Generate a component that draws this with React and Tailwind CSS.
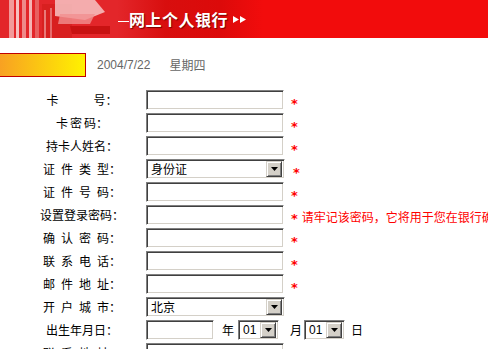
import React from 'react';

const inset = "border border-t-[#808080] border-l-[#808080] border-b-white border-r-white shadow-[inset_1px_1px_0_#404040,inset_-1px_-1px_0_#d4d0c8] bg-white";

function Label({ chars, gap = 0 }) {
  return (
    <div className="w-[146px] shrink-0 pl-[18px] flex justify-center text-[12px] text-black leading-none">
      <div className="flex" style={{ gap }}>
        {chars.map((c, i) => <span key={i}>{c}</span>)}
      </div>
      <span>：</span>
    </div>
  );
}

function Star({ ml = 'ml-[7px]' }) {
  return <span className={`${ml} shrink-0 mt-[7px] text-[#ff0000] text-[13px] font-bold leading-none font-['DejaVu_Sans',sans-serif]`}>*</span>;
}

function TextBox({ w = 'w-[138px]' }) {
  return <input className={`${w} shrink-0 h-[20px] ${inset} outline-none px-1 text-[12px]`} />;
}

function Select({ w = 'w-[139px]', value, mono }) {
  return (
    <div className={`${w} shrink-0 h-[20px] ${inset} flex items-center justify-between pl-[4px] pr-[2px]`}>
      <span className={`text-[12px] leading-none text-black ${mono ? "font-['Liberation_Sans',sans-serif]" : ''}`}>{value}</span>
      <div className="w-[16px] h-[16px] bg-[#d4d0c8] border border-t-[#d4d0c8] border-l-[#d4d0c8] border-b-[#404040] border-r-[#404040] shadow-[inset_1px_1px_0_#fff,inset_-1px_-1px_0_#808080] flex items-center justify-center">
        <svg width="7" height="4" viewBox="0 0 7 4"><path d="M0 0h7L3.5 4z" fill="#000" /></svg>
      </div>
    </div>
  );
}

function Row({ children }) {
  return <div className="flex items-center h-[20px] mb-[3px] whitespace-nowrap">{children}</div>;
}

function BannerPhoto() {
  return (
    <svg width="118" height="38" viewBox="0 0 118 38" className="shrink-0">
      <rect width="118" height="38" fill="#e3262a" />
      <rect x="9" y="0" width="5" height="38" fill="#f29a9a" />
      <rect x="16" y="0" width="3" height="38" fill="#f6c0c0" />
      <rect x="22" y="0" width="4" height="38" fill="#ee8a8a" />
      <rect x="29" y="0" width="3" height="38" fill="#f4b4b4" />
      <rect x="35" y="0" width="4" height="38" fill="#e86060" />
      <rect x="42" y="4" width="30" height="34" fill="#d82020" />
      <path d="M55 0h40l10 12-20 8-30-4z" fill="#f7c4c4" opacity="0.85" />
      <path d="M60 14h35l-5 10H58z" fill="#f19090" opacity="0.8" />
      <path d="M70 26h40v8H72z" fill="#c81212" />
      <rect x="44" y="10" width="2" height="28" fill="#f0a0a0" opacity="0.7" />
      <rect x="50" y="8" width="2" height="30" fill="#f0a0a0" opacity="0.6" />
    </svg>
  );
}

export default function App() {
  return (
    <div className="w-[488px] h-[349px] overflow-hidden bg-white font-['Noto_Sans_CJK_SC',sans-serif]">
      {/* Banner */}
      <div className="h-[38px] flex items-center bg-[linear-gradient(90deg,#e3262a_0%,#e3262a_24%,#d80e0e_34%,#dc0a0a_45%,#f20c0c_54%,#f20c0c_100%)]">
        <BannerPhoto />
        <div className="w-[11px] h-px bg-white mt-[5px]" />
        <span className="text-white text-[16px] font-bold leading-none tracking-[0.5px] [text-shadow:1px_1px_1px_#7a0000]">网上个人银行</span>
        <span className="ml-[5px] flex gap-[1px]">
          <svg width="6" height="7" viewBox="0 0 6 7"><path d="M0 0l6 3.5L0 7z" fill="#fff" /></svg>
          <svg width="6" height="7" viewBox="0 0 6 7"><path d="M0 0l6 3.5L0 7z" fill="#fff" /></svg>
        </span>
      </div>

      {/* Date line */}
      <div className="mt-[15px] flex items-center">
        <div className="w-[86px] h-[24px] border-y border-r border-[#c00000] bg-[linear-gradient(90deg,#f8a122,#fff200)]" />
        <span className="ml-[11px] text-[12px] text-[#666] font-['Liberation_Sans',sans-serif]">2004/7/22</span>
        <span className="ml-[19px] text-[12px] text-[#666]">星期四</span>
      </div>

      {/* Form */}
      <div className="mt-[13px]">
        <Row><Label chars={['卡', '号']} gap={35} /><TextBox /><Star /></Row>
        <Row><Label chars={['卡', '密', '码']} gap={2} /><TextBox /><Star /></Row>
        <Row><Label chars={['持卡人姓名']} /><TextBox /><Star /></Row>
        <Row><Label chars={['证', '件', '类', '型']} gap={6} /><Select value="身份证" /><Star ml="ml-[8px]" /></Row>
        <Row><Label chars={['证', '件', '号', '码']} gap={6} /><TextBox /><Star /></Row>
        <Row>
          <Label chars={['设置登录密码']} />
          <TextBox />
          <Star />
          <span className="ml-[4px] shrink-0 mt-[3px] text-[12px] text-[#ff0000] leading-none">请牢记该密码，它将用于您在银行确认您的身份。</span>
        </Row>
        <Row><Label chars={['确', '认', '密', '码']} gap={6} /><TextBox /><Star /></Row>
        <Row><Label chars={['联', '系', '电', '话']} gap={6} /><TextBox /><Star /></Row>
        <Row><Label chars={['邮', '件', '地', '址']} gap={6} /><TextBox /><Star /></Row>
        <Row><Label chars={['开', '户', '城', '市']} gap={6} /><Select value="北京" /></Row>
        <Row>
          <Label chars={['出生年月日']} />
          <TextBox w="w-[68px]" />
          <span className="ml-[8px] text-[12px] text-black">年</span>
          <div className="ml-[4px]"><Select w="w-[41px]" value="01" mono /></div>
          <span className="ml-[11px] text-[12px] text-black">月</span>
          <div className="ml-[2px]"><Select w="w-[41px]" value="01" mono /></div>
          <span className="ml-[6px] text-[12px] text-black">日</span>
        </Row>
        <Row><Label chars={['联', '系', '地', '址']} gap={6} /><TextBox /></Row>
      </div>
    </div>
  );
}
